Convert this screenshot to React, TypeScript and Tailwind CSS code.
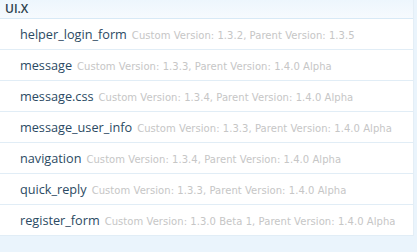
const items = [
  { name: "helper_login_form", custom: "1.3.2", parent: "1.3.5" },
  { name: "message", custom: "1.3.3", parent: "1.4.0 Alpha" },
  { name: "message.css", custom: "1.3.4", parent: "1.4.0 Alpha" },
  { name: "message_user_info", custom: "1.3.3", parent: "1.4.0 Alpha" },
  { name: "navigation", custom: "1.3.4", parent: "1.4.0 Alpha" },
  { name: "quick_reply", custom: "1.3.3", parent: "1.4.0 Alpha" },
  { name: "register_form", custom: "1.3.0 Beta 1", parent: "1.4.0 Alpha" },
];

export default function App() {
  return (
    <div className="w-[417px] h-[252px] bg-[#eaf4fc] overflow-hidden">
      <div className="w-[414px] bg-white border-r border-[#e4eef6]">
        <div className="h-[19px] pl-[5px] flex items-center bg-gradient-to-b from-[#edf6fd] to-[#f6fafe] border-b border-[#d8e9f6] text-[12px] font-semibold text-[#2d3e4c] font-['Open_Sans',sans-serif]">
          UI.X
        </div>
        {items.map(item => (
          <div
            key={item.name}
            className="h-[31px] pl-[20px] pt-[2px] flex items-center border-b border-[#e1edf6] whitespace-nowrap"
          >
            <span className="text-[12.7px] text-[#2b4a63] font-['Open_Sans',sans-serif]">{item.name}</span>
            <span className="ml-[5px] text-[10px] tracking-[0.05px] text-[#c6c6c6] font-['DejaVu_Sans',sans-serif]">
              Custom Version: {item.custom}, Parent Version: {item.parent}
            </span>
          </div>
        ))}
      </div>
    </div>
  );
}
